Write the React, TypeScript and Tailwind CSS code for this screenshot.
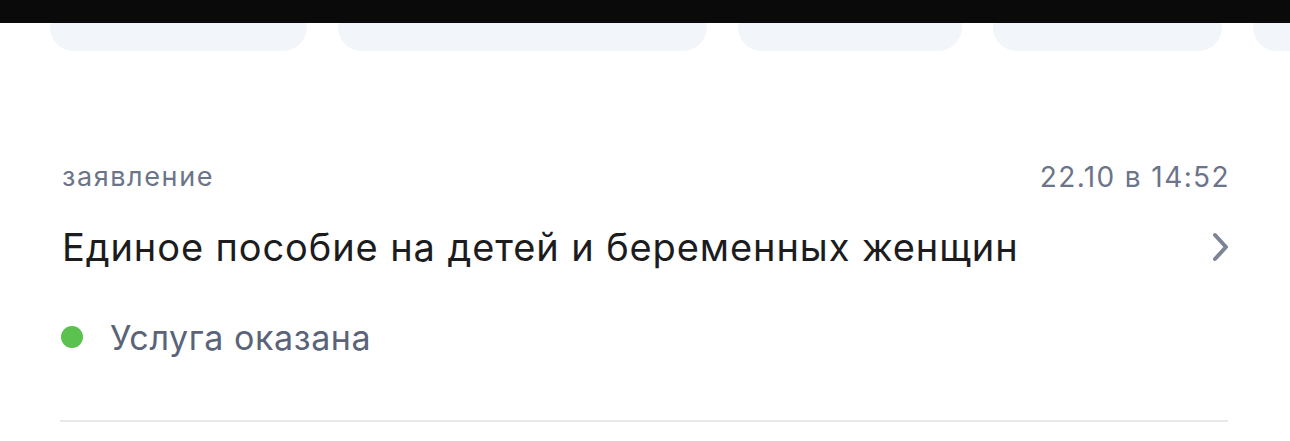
import React from "react";

export default function App() {
  return (
    <div className="w-[1290px] h-[441px] bg-white overflow-hidden relative" style={{ fontFamily: "Inter, 'Noto Sans', sans-serif" }}>
      <div className="h-[23px] bg-[#0a0a0a]" />
      <div className="absolute top-0 left-0 right-0 h-[23px] bg-[#0a0a0a] z-10" />
      <div className="flex gap-[31px] pl-[50px] -mt-[20px] h-[48px] overflow-hidden">
        <div className="w-[257px] shrink-0 h-full rounded-[28px] bg-[#f2f5fa]" />
        <div className="w-[369px] shrink-0 h-full rounded-[28px] bg-[#f2f5fa]" />
        <div className="w-[224px] shrink-0 h-full rounded-[28px] bg-[#f2f5fa]" />
        <div className="w-[229px] shrink-0 h-full rounded-[28px] bg-[#f2f5fa]" />
        <div className="w-[229px] shrink-0 h-full rounded-[28px] bg-[#f2f5fa]" />
      </div>
      <div className="px-[62px] pt-[111px]">
        <div className="flex justify-between items-center h-[30px] text-[#6b7488]">
          <span className="text-[27px] tracking-[1.6px]">заявление</span>
          <span className="text-[28px] tracking-[1.4px] -mr-[2px]">22.10 в 14:52</span>
        </div>
        <div className="flex justify-between items-center mt-[33px] h-[44px]">
          <span className="text-[38px] text-[#1c1c1e] tracking-[0.9px]">Единое пособие на детей и беременных женщин</span>
          <svg width="18" height="30" viewBox="0 0 18 30" className="-mr-[2px]">
            <path d="M3 3 L14 15 L3 27" fill="none" stroke="#7c8496" strokeWidth="4" strokeLinecap="round" strokeLinejoin="round" />
          </svg>
        </div>
        <div className="flex items-center mt-[46px] h-[44px]">
          <span className="w-[22px] h-[22px] rounded-full bg-[#5cc24f] ml-[-1px]" />
          <span className="ml-[27px] text-[34px] text-[#5a6378] tracking-[0.6px]">Услуга оказана</span>
        </div>
        <div className="mt-[61px] h-[2px] bg-[#e6e8ec] -ml-[2px]" />
      </div>
    </div>
  );
}
